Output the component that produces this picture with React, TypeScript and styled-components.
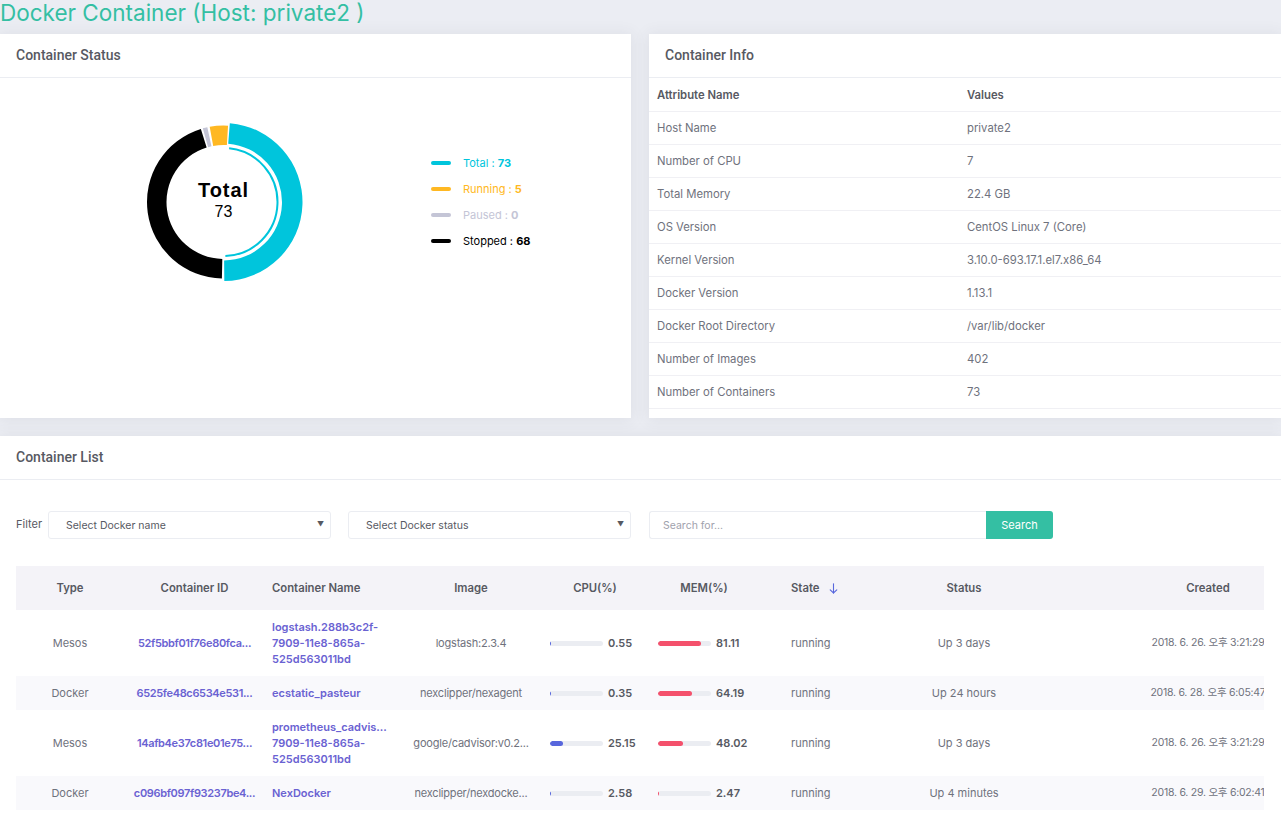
import React from "react";
import styled, { createGlobalStyle } from "styled-components";

const Global = createGlobalStyle`
  html, body { margin: 0; padding: 0; }
  body {
    background: #ebedf3;
    font-family: Inter, "Noto Sans", "Noto Sans CJK KR", sans-serif;
    color: #575962;
  }
  * { box-sizing: border-box; }
`;

const Page = styled.div`
  width: 1281px;
  overflow: hidden;
`;

const Title = styled.h1`
  margin: 0 0 8px 0;
  font-family: Inter, sans-serif;
  font-weight: 400;
  font-size: 22.5px;
  line-height: 26px;
  color: #34bfa3;
  white-space: nowrap;
`;

const TopGrid = styled.div`
  display: grid;
  grid-template-columns: 631px 1fr;
  column-gap: 18px;
  margin-bottom: 18px;
`;

const Card = styled.section<{ $h?: number }>`
  background: #fff;
  box-shadow: 0 1px 15px 1px rgba(69, 65, 78, 0.08);
  ${(p) => (p.$h ? `height: ${p.$h}px;` : "")}
  overflow: hidden;
`;

const CardHead = styled.div`
  height: 44px;
  padding: 0 16px 1px;
  display: flex;
  align-items: center;
  border-bottom: 1px solid #ebedf2;
`;

const CardTitle = styled.h3`
  margin: 0;
  font-family: Roboto, sans-serif;
  font-weight: 500;
  font-size: 14px;
  color: #575962;
`;

const StatusBody = styled.div`
  display: flex;
  align-items: flex-start;
  padding: 38px 0 0 138px;
`;

const DonutWrap = styled.div`
  position: relative;
  width: 171px;
  height: 172px;
  flex: none;
`;

const DonutCenter = styled.div`
  position: absolute;
  left: 0;
  right: 0;
  top: 63px;
  text-align: center;
  font-family: "Liberation Sans", Arial, sans-serif;
  color: #000;
`;

const DonutLabel = styled.div`
  font-weight: 700;
  font-size: 20px;
  line-height: 22px;
  letter-spacing: 0.9px;
`;

const DonutValue = styled.div`
  font-size: 16px;
  line-height: 20px;
  margin-top: 1px;
`;

const Legend = styled.ul`
  list-style: none;
  margin: 34px 0 0 122px;
  padding: 0;
`;

const LegendItem = styled.li<{ $color: string; $text: string }>`
  display: flex;
  align-items: center;
  height: 26px;
  gap: 12px;
  font-size: 11px;
  color: ${(p) => p.$text};
  &::before {
    content: "";
    width: 20px;
    height: 4px;
    border-radius: 2px;
    background: ${(p) => p.$color};
  }
  b {
    font-weight: 700;
  }
`;

const InfoTable = styled.table`
  width: 100%;
  border-collapse: collapse;
  font-size: 11.3px;
`;

const InfoTh = styled.th<{ $w?: number }>`
  height: 33px;
  padding: 1px 8px 0;
  text-align: left;
  font-weight: 600;
  color: #575962;
  border-bottom: 1px solid #f0f0f4;
  ${(p) => (p.$w ? `width: ${p.$w}px;` : "")}
`;

const InfoTd = styled.td`
  height: 33px;
  padding: 0 8px;
  color: #6f727d;
  border-bottom: 1px solid #f0f0f4;
`;

const ListBody = styled.div`
  padding: 31px 16px 16px;
`;

const FilterRow = styled.div`
  display: flex;
  align-items: center;
  height: 28px;
  margin-bottom: 27px;
`;

const FilterLabel = styled.span`
  width: 32px;
  font-size: 11px;
  color: #575962;
  margin-top: -3px;
`;

const SelectBox = styled.div<{ $mr: number }>`
  width: 283px;
  height: 28px;
  margin-right: ${(p) => p.$mr}px;
  border: 1px solid #ebedf2;
  border-radius: 3px;
  display: flex;
  align-items: center;
  justify-content: space-between;
  padding: 0 6px 0 17px;
  font-size: 10.5px;
  color: #575962;
  background: #fff;
`;

const Caret = styled.span`
  font-size: 7px;
  color: #575962;
  margin-top: -2px;
`;

const SearchInput = styled.input`
  width: 337px;
  height: 28px;
  border: 1px solid #ebedf2;
  border-right: none;
  border-radius: 3px 0 0 3px;
  padding: 0 13px;
  font-family: Inter, sans-serif;
  font-size: 10.5px;
  color: #575962;
  outline: none;
  &::placeholder {
    color: #9fa2ad;
  }
`;

const SearchButton = styled.button`
  width: 67px;
  height: 28px;
  border: none;
  border-radius: 0 3px 3px 0;
  background: #34bfa3;
  color: #fff;
  font-family: Inter, sans-serif;
  font-size: 11px;
  padding: 0;
`;

const TableWrap = styled.div`
  width: 1248px;
  overflow: hidden;
`;

const DataTable = styled.table`
  width: 1342px;
  table-layout: fixed;
  border-collapse: collapse;
  font-size: 11px;
`;

const Th = styled.th<{ $align?: string; $pl?: number }>`
  height: 44px;
  background: #f4f3f8;
  font-weight: 600;
  font-size: 11.3px;
  color: #575962;
  text-align: ${(p) => p.$align || "center"};
  padding: 0 10px 0 ${(p) => (p.$pl != null ? p.$pl : 10)}px;
  white-space: nowrap;
`;

const SortHead = styled.span`
  display: inline-flex;
  align-items: center;
  gap: 10px;
`;

const Tr = styled.tr<{ $alt: boolean; $h: number }>`
  height: ${(p) => p.$h}px;
  background: ${(p) => (p.$alt ? "#f9f9fc" : "#fff")};
`;

const Td = styled.td<{ $align?: string; $pl?: number; $pr?: number }>`
  padding: 0 ${(p) => (p.$pr != null ? p.$pr : 10)}px 0
    ${(p) => (p.$pl != null ? p.$pl : 10)}px;
  line-height: 16px;
  text-align: ${(p) => p.$align || "center"};
  color: #6f727d;
  vertical-align: middle;
  white-space: nowrap;
`;

const Plain = styled.div<{ $ls?: number }>`
  white-space: nowrap;
  height: 16px;
  letter-spacing: ${(p) => p.$ls || 0}px;
`;

const LinkText = styled.div`
  color: #6a62d2;
  font-weight: 600;
  letter-spacing: -0.35px;
  white-space: nowrap;
  height: 16px;
`;

const NameLine = styled.div`
  color: #6a62d2;
  font-weight: 600;
  white-space: nowrap;
  height: 16px;
`;

const BarCell = styled.div`
  display: flex;
  align-items: center;
  gap: 5px;
  height: 16px;
`;

const BarTrack = styled.div`
  width: 53px;
  height: 5px;
  border-radius: 3px;
  background: #ebedf2;
  overflow: hidden;
  flex: none;
`;

const BarFill = styled.div<{ $color: string }>`
  height: 100%;
  border-radius: 3px;
  background: ${(p) => p.$color};
`;

const BarValue = styled.span`
  font-weight: 600;
  color: #575962;
`;

const Created = styled.div`
  font-family: Inter, "Noto Sans CJK KR", sans-serif;
  font-size: 10.5px;
  letter-spacing: -0.25px;
  height: 16px;
  line-height: 16px;
`;

function pt(cx: number, cy: number, r: number, a: number) {
  const rad = (a * Math.PI) / 180;
  return [cx + r * Math.sin(rad), cy - r * Math.cos(rad)];
}

function slice(cx: number, cy: number, ro: number, ri: number, a0: number, a1: number) {
  const large = a1 - a0 > 180 ? 1 : 0;
  const [x0, y0] = pt(cx, cy, ro, a0);
  const [x1, y1] = pt(cx, cy, ro, a1);
  const [x2, y2] = pt(cx, cy, ri, a1);
  const [x3, y3] = pt(cx, cy, ri, a0);
  return `M${x0} ${y0} A${ro} ${ro} 0 ${large} 1 ${x1} ${y1} L${x2} ${y2} A${ri} ${ri} 0 ${large} 0 ${x3} ${y3} Z`;
}

function arc(cx: number, cy: number, r: number, a0: number, a1: number) {
  const large = a1 - a0 > 180 ? 1 : 0;
  const [x0, y0] = pt(cx, cy, r, a0);
  const [x1, y1] = pt(cx, cy, r, a1);
  return `M${x0} ${y0} A${r} ${r} 0 ${large} 1 ${x1} ${y1}`;
}

const Donut: React.FC = () => {
  const cx = 85.5;
  const cy = 86;
  return (
    <DonutWrap>
      <svg width="171" height="172" viewBox="0 0 171 172">
        <path d={slice(cx, cy, 79, 58.5, 4.6, 179.4)} fill="#00c5dc" />
        <path d={arc(cx, cy, 54, 6, 178)} fill="none" stroke="#00c5dc" strokeWidth="2" />
        <path d={slice(cx, cy, 76.5, 57, 181.2, 342.8)} fill="#000" />
        <path d={slice(cx, cy, 76.5, 57, 344.3, 347.8)} fill="#c4c5d6" />
        <path d={slice(cx, cy, 76.5, 57, 349.6, 363.4)} fill="#ffb822" />
      </svg>
      <DonutCenter>
        <DonutLabel>Total</DonutLabel>
        <DonutValue>73</DonutValue>
      </DonutCenter>
    </DonutWrap>
  );
};

const legend = [
  { label: "Total", value: 73, color: "#00c5dc", text: "#00c5dc" },
  { label: "Running", value: 5, color: "#ffb822", text: "#ffb822" },
  { label: "Paused", value: 0, color: "#c4c5d6", text: "#c4c5d6" },
  { label: "Stopped", value: 68, color: "#000", text: "#000" },
];

const info: [string, string][] = [
  ["Host Name", "private2"],
  ["Number of CPU", "7"],
  ["Total Memory", "22.4 GB"],
  ["OS Version", "CentOS Linux 7 (Core)"],
  ["Kernel Version", "3.10.0-693.17.1.el7.x86_64"],
  ["Docker Version", "1.13.1"],
  ["Docker Root Directory", "/var/lib/docker"],
  ["Number of Images", "402"],
  ["Number of Containers", "73"],
];

type Row = {
  type: string;
  id: string;
  name: string[];
  image: string;
  cpu: number;
  mem: number;
  state: string;
  status: string;
  created: string;
};

const rows: Row[] = [
  {
    type: "Mesos",
    id: "52f5bbf01f76e80fca...",
    name: ["logstash.288b3c2f-", "7909-11e8-865a-", "525d563011bd"],
    image: "logstash:2.3.4",
    cpu: 0.55,
    mem: 81.11,
    state: "running",
    status: "Up 3 days",
    created: "2018. 6. 26. 오후 3:21:29",
  },
  {
    type: "Docker",
    id: "6525fe48c6534e531...",
    name: ["ecstatic_pasteur"],
    image: "nexclipper/nexagent",
    cpu: 0.35,
    mem: 64.19,
    state: "running",
    status: "Up 24 hours",
    created: "2018. 6. 28. 오후 6:05:47",
  },
  {
    type: "Mesos",
    id: "14afb4e37c81e01e75...",
    name: ["prometheus_cadvis...", "7909-11e8-865a-", "525d563011bd"],
    image: "google/cadvisor:v0.2...",
    cpu: 25.15,
    mem: 48.02,
    state: "running",
    status: "Up 3 days",
    created: "2018. 6. 26. 오후 3:21:29",
  },
  {
    type: "Docker",
    id: "c096bf097f93237be4...",
    name: ["NexDocker"],
    image: "nexclipper/nexdocke...",
    cpu: 2.58,
    mem: 2.47,
    state: "running",
    status: "Up 4 minutes",
    created: "2018. 6. 29. 오후 6:02:41",
  },
];

const colWidths = [108, 141, 137, 138, 110, 108, 112, 188, 300];

const ArrowDown = () => (
  <svg width="9" height="11" viewBox="0 0 9 11" fill="none" stroke="#5867dd" strokeWidth="1.1" strokeLinecap="round">
    <path d="M4.5 0.8 V10" />
    <path d="M1.2 6.8 L4.5 10 L7.8 6.8" />
  </svg>
);

const Bar: React.FC<{ value: number; color: string }> = ({ value, color }) => (
  <BarCell>
    <BarTrack>
      <BarFill $color={color} style={{ width: `${value}%` }} />
    </BarTrack>
    <BarValue>{value.toFixed(2)}</BarValue>
  </BarCell>
);

export default function App() {
  return (
    <Page>
      <Global />
      <Title>Docker Container (Host: private2 )</Title>
      <TopGrid>
        <Card $h={384}>
          <CardHead>
            <CardTitle>Container Status</CardTitle>
          </CardHead>
          <StatusBody>
            <Donut />
            <Legend>
              {legend.map((l) => (
                <LegendItem key={l.label} $color={l.color} $text={l.text}>
                  <span>
                    {l.label} : <b>{l.value}</b>
                  </span>
                </LegendItem>
              ))}
            </Legend>
          </StatusBody>
        </Card>
        <Card $h={384}>
          <CardHead>
            <CardTitle>Container Info</CardTitle>
          </CardHead>
          <InfoTable>
            <thead>
              <tr>
                <InfoTh $w={310}>Attribute Name</InfoTh>
                <InfoTh>Values</InfoTh>
              </tr>
            </thead>
            <tbody>
              {info.map(([k, v]) => (
                <tr key={k}>
                  <InfoTd>{k}</InfoTd>
                  <InfoTd>{v}</InfoTd>
                </tr>
              ))}
            </tbody>
          </InfoTable>
        </Card>
      </TopGrid>
      <Card>
        <CardHead>
          <CardTitle>Container List</CardTitle>
        </CardHead>
        <ListBody>
          <FilterRow>
            <FilterLabel>Filter</FilterLabel>
            <SelectBox $mr={17}>
              <span>Select Docker name</span>
              <Caret>▼</Caret>
            </SelectBox>
            <SelectBox $mr={18}>
              <span>Select Docker status</span>
              <Caret>▼</Caret>
            </SelectBox>
            <SearchInput placeholder="Search for..." />
            <SearchButton>Search</SearchButton>
          </FilterRow>
          <TableWrap>
            <DataTable>
              <colgroup>
                {colWidths.map((w, i) => (
                  <col key={i} style={{ width: w }} />
                ))}
              </colgroup>
              <thead>
                <tr>
                  <Th>Type</Th>
                  <Th>Container ID</Th>
                  <Th $align="left" $pl={7}>Container Name</Th>
                  <Th>Image</Th>
                  <Th>CPU(%)</Th>
                  <Th>MEM(%)</Th>
                  <Th $align="left" $pl={33}>
                    <SortHead>
                      State <ArrowDown />
                    </SortHead>
                  </Th>
                  <Th>Status</Th>
                  <Th>Created</Th>
                </tr>
              </thead>
              <tbody>
                {rows.map((r, i) => (
                  <Tr key={i} $alt={i % 2 === 1} $h={r.name.length > 1 ? 66 : 34}>
                    <Td>
                      <Plain>{r.type}</Plain>
                    </Td>
                    <Td $pl={8} $pr={8}>
                      <LinkText>{r.id}</LinkText>
                    </Td>
                    <Td $align="left" $pl={7} $pr={6}>
                      {r.name.map((n, j) => (
                        <NameLine key={j}>{n}</NameLine>
                      ))}
                    </Td>
                    <Td $pl={6} $pr={6}>
                      <Plain $ls={-0.2}>{r.image}</Plain>
                    </Td>
                    <Td $align="left">
                      <Bar value={r.cpu} color="#5867dd" />
                    </Td>
                    <Td $align="left" $pl={8}>
                      <Bar value={r.mem} color="#f4516c" />
                    </Td>
                    <Td $align="left" $pl={33}>
                      <Plain>{r.state}</Plain>
                    </Td>
                    <Td>
                      <Plain>{r.status}</Plain>
                    </Td>
                    <Td>
                      <Created>{r.created}</Created>
                    </Td>
                  </Tr>
                ))}
              </tbody>
            </DataTable>
          </TableWrap>
        </ListBody>
      </Card>
    </Page>
  );
}
